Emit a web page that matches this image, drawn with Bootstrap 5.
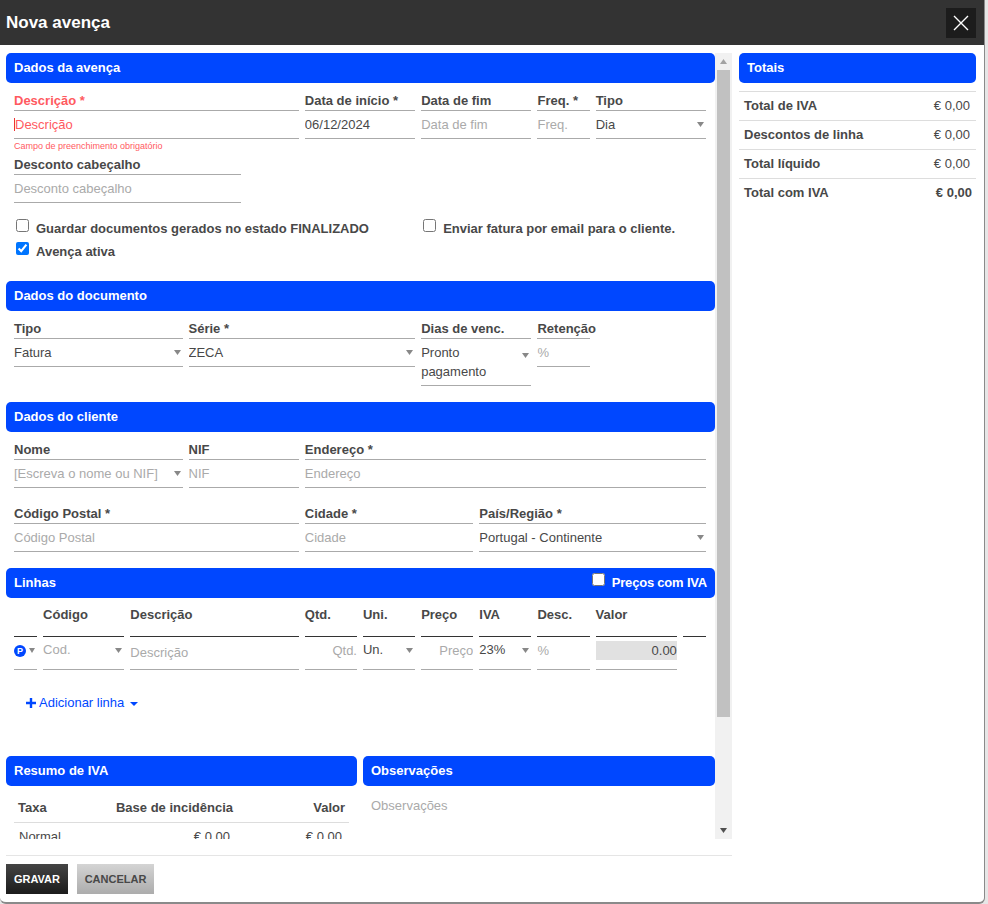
<!DOCTYPE html>
<html lang="pt">
<head>
<meta charset="utf-8">
<title>Nova avença</title>
<link href="https://cdn.jsdelivr.net/npm/bootstrap@5.3.0/dist/css/bootstrap.min.css" rel="stylesheet">
<style>
html,body{height:100%;overflow:hidden;background:#e6e6e6;}
body{font-family:"Liberation Sans",Arial,sans-serif;font-size:13px;line-height:19px;color:#484848;}
.dlg{width:985px;height:904px;background:#fff;border-right:1px solid #8a8a8a;border-bottom:2px solid #8a8a8a;border-radius:0 0 6px 6px;}
.dlg-head{height:45px;background:#333;padding:0 8px 0 6px;}
.dlg-title{font-size:17px;font-weight:700;color:#fff;line-height:43px;margin:0;}
.dlg-close{width:30px;height:30px;background:#1c1c1c;border:0;padding:0;display:flex;align-items:center;justify-content:center;}
.dlg-body{padding:8px 8px 0 6px;}
.main-col{width:726px;}
.pane{height:786px;}
.scroller{width:709px;height:786px;overflow:hidden;}
.sbar{width:17px;height:786px;background:#f1f1f1;padding:0 2px;}
.sbar-up,.sbar-down{height:17px;}
.sbar-thumb{height:647px;background:#c1c1c1;}
.sbar-gap{height:105px;}
.side-col{width:237px;margin-left:7px;}
.sec-head{height:30px;background:#0047ff;color:#fff;font-weight:700;border-radius:5px;padding:0 8px;line-height:29px;margin:0;font-size:13px;}
.frow{--bs-gutter-x:6px;--bs-gutter-y:0;margin-left:5px;margin-right:0;width:698px;}
.fld-label{display:block;height:20px;border-bottom:1px solid #aaa;font-weight:700;line-height:19px;margin:0;white-space:nowrap;}
.fld-input.form-control,.fld-input.form-select{display:block;width:100%;height:28px;border:0;border-bottom:1px solid #aaa;border-radius:0;padding:0;font-size:13px;line-height:19px;color:#484848;font-family:inherit;background-color:#fff;box-shadow:none;}
.fld-input.form-select{background-image:url("data:image/svg+xml,%3Csvg xmlns='http://www.w3.org/2000/svg' width='7' height='5'%3E%3Cpath d='M0 0h7L3.500 5z' fill='%23888'/%3E%3C/svg%3E");background-repeat:no-repeat;background-position:right 2px center;background-size:7px 5px;padding-right:12px;}
.fld-input::placeholder{color:#aaa;opacity:1;}
.fld-input.form-select.is-empty,.line-input.form-select.is-empty{color:#aaa;}
div.fld-input.form-select.two-lines{height:47px;padding-top:4px;white-space:normal;background-position:right 2px top 14px;}
.req-label{color:#ff5a5f;}
.req-input.form-control{padding-left:1px;}
.req-input::placeholder{color:#ff5a5f;opacity:1;}
.caret-mark{position:absolute;left:3px;top:27px;width:1px;height:13px;background:#e33;}
.hint-err{color:#ff5a5f;font-size:9px;line-height:12px;height:12px;margin-top:1px;margin-bottom:3px;white-space:nowrap;}
.cb{width:13px;height:13px;margin:0;flex:none;}
.cb-text{font-weight:700;}
.cb-line{height:23px;gap:7px;}
.cb-off{margin-left:2px;}
.iva-check{gap:7px;letter-spacing:-.2px;}
.iva-check .cb{margin-top:5px;}
.w-half{flex:0 0 auto;width:4.1667%;}
.w-onehalf{flex:0 0 auto;width:12.5%;}
.th-label{display:block;height:39px;border-bottom:1px solid #333;font-weight:700;line-height:19px;padding-top:7px;margin:0;white-space:nowrap;}
.line-h{height:33px;border:0;border-bottom:1px solid #aaa;padding-top:8px;}
.line-cell{display:flex;align-items:flex-start;}
.tag-p{width:12px;height:12px;border-radius:50%;background:#0047ff;color:#fff;font-size:9px;font-weight:700;line-height:12px;text-align:center;flex:none;}
.mini-caret{width:0;height:0;border-left:3px solid transparent;border-right:3px solid transparent;border-top:5px solid #888;margin-left:3px;margin-top:3px;}
.line-input.form-control,.line-input.form-select{display:block;width:100%;height:33px;border:0;border-bottom:1px solid #aaa;border-radius:0;padding:0 0 6px;font-size:13px;color:#484848;font-family:inherit;background-color:#fff;box-shadow:none;}
.line-input.form-select{background-image:url("data:image/svg+xml,%3Csvg xmlns='http://www.w3.org/2000/svg' width='7' height='5'%3E%3Cpath d='M0 0h7L3.500 5z' fill='%23888'/%3E%3C/svg%3E");background-repeat:no-repeat;background-position:right 2px top 11px;background-size:7px 5px;}
.line-input::placeholder{color:#aaa;opacity:1;}
.line-input.form-control.ph-low{padding:0 0 2px;}
.valor-box{height:19px;background:#e1e1e1;text-align:right;line-height:19px;}
.valor-cell{height:33px;border-bottom:1px solid #aaa;padding-top:4px;}
.add-line{color:#0047ff;text-decoration:none;display:inline-flex;align-items:center;margin-left:20px;}
.add-plus{margin-right:3px;}
.add-caret{width:0;height:0;border-left:4px solid transparent;border-right:4px solid transparent;border-top:4px solid #0047ff;margin-left:6px;margin-top:2px;}
.add-wrap{height:86px;padding-top:23px;}
.half-a{width:351px;flex:none;}
.half-b{width:352px;flex:none;margin-left:6px;}
.iva-tb{width:335px;margin:10px 0 0 8px;border-collapse:collapse;}
.iva-tb th{font-weight:700;padding:2px 4px 4px;border-bottom:1px solid #ddd;height:26px;line-height:19px;}
.iva-tb th:first-child{width:90px;}
.iva-tb th:last-child{width:112px;}
.iva-tb td{padding:4px 7px 4px 5px;line-height:19px;}
.obs-area{display:block;width:100%;height:60px;border:0;resize:none;padding:10px 8px 0;font-size:13px;line-height:19px;color:#484848;font-family:inherit;outline:0;}
.obs-area::placeholder{color:#aaa;opacity:1;}
.tot-tb{width:237px;margin-top:8px;border-collapse:collapse;}
.tot-tb td{border-top:1px solid #ddd;height:29px;padding:0 4px 2px 5px;line-height:19px;font-weight:700;}
.tot-tb td.val{font-weight:400;text-align:right;padding-right:6px;}
.tot-tb td.val-b{font-weight:700;text-align:right;padding-right:4px;}
.foot-bar{width:726px;border-top:1px solid #e5e5e5;margin-top:16px;padding-top:8px;}
.act-btn.btn{height:30px;border:0;border-radius:0;padding:0;font-size:11px;font-weight:700;line-height:30px;}
.act-save.btn{background:linear-gradient(#444,#1c1c1c);color:#fff;width:62px;}
.act-cancel.btn{background:linear-gradient(#d4d4d4,#acacac);color:#484848;width:77px;margin-left:9px;}
</style>
</head>
<body>
<div class="dlg d-flex flex-column">
  <div class="dlg-head d-flex align-items-center justify-content-between">
    <h5 class="dlg-title">Nova avença</h5>
    <button class="dlg-close" type="button" aria-label="Fechar"><svg width="16" height="16" viewBox="0 0 16 16"><path d="M1 1l14 14M15 1L1 15" stroke="#fff" stroke-width="1.400" fill="none"/></svg></button>
  </div>
  <div class="dlg-body d-flex">
    <div class="main-col">
      <div class="pane d-flex">
        <div class="scroller">
          <h6 class="sec-head">Dados da avença</h6>
          <div class="row frow mt-2">
            <div class="col-5 position-relative"><label class="fld-label req-label">Descrição *</label><input class="form-control fld-input req-input" placeholder="Descrição"><span class="caret-mark"></span><div class="hint-err">Campo de preenchimento obrigatório</div></div>
            <div class="col-2"><label class="fld-label">Data de início *</label><input class="form-control fld-input" value="06/12/2024"></div>
            <div class="col-2"><label class="fld-label">Data de fim</label><input class="form-control fld-input" placeholder="Data de fim"></div>
            <div class="col-1"><label class="fld-label">Freq. *</label><input class="form-control fld-input" placeholder="Freq."></div>
            <div class="col-2"><label class="fld-label">Tipo</label><select class="form-select fld-input"><option>Dia</option></select></div>
          </div>
          <div class="row frow">
            <div class="col-4"><label class="fld-label">Desconto cabeçalho</label><input class="form-control fld-input" placeholder="Desconto cabeçalho"></div>
          </div>
          <div class="row frow mt-3">
            <div class="col-7 d-flex cb-line"><input class="cb cb-off" type="checkbox"><span class="cb-text">Guardar documentos gerados no estado FINALIZADO</span></div>
            <div class="col-5 d-flex cb-line"><input class="cb cb-off" type="checkbox"><span class="cb-text">Enviar fatura por email para o cliente.</span></div>
          </div>
          <div class="row frow">
            <div class="col-12 d-flex cb-line"><input class="cb cb-off" type="checkbox" checked><span class="cb-text">Avença ativa</span></div>
          </div>

          <h6 class="sec-head mt-3">Dados do documento</h6>
          <div class="row frow mt-2">
            <div class="col-3"><label class="fld-label">Tipo</label><select class="form-select fld-input"><option>Fatura</option></select></div>
            <div class="col-4"><label class="fld-label">Série *</label><select class="form-select fld-input"><option>ZECA</option></select></div>
            <div class="col-2"><label class="fld-label">Dias de venc.</label><div class="form-select fld-input two-lines">Pronto pagamento</div></div>
            <div class="col-1"><label class="fld-label">Retenção</label><input class="form-control fld-input" placeholder="%"></div>
          </div>

          <h6 class="sec-head mt-3">Dados do cliente</h6>
          <div class="row frow mt-2">
            <div class="col-3"><label class="fld-label">Nome</label><select class="form-select fld-input is-empty"><option>[Escreva o nome ou NIF]</option></select></div>
            <div class="col-2"><label class="fld-label">NIF</label><input class="form-control fld-input" placeholder="NIF"></div>
            <div class="col-7"><label class="fld-label">Endereço *</label><input class="form-control fld-input" placeholder="Endereço"></div>
          </div>
          <div class="row frow mt-3">
            <div class="col-5"><label class="fld-label">Código Postal *</label><input class="form-control fld-input" placeholder="Código Postal"></div>
            <div class="col-3"><label class="fld-label">Cidade *</label><input class="form-control fld-input" placeholder="Cidade"></div>
            <div class="col-4"><label class="fld-label">País/Região *</label><select class="form-select fld-input"><option>Portugal - Continente</option></select></div>
          </div>

          <div class="sec-head mt-3 d-flex justify-content-between">
            <span>Linhas</span>
            <span class="d-flex iva-check"><input class="cb" type="checkbox"><span>Preços com IVA</span></span>
          </div>
          <div class="row frow">
            <div class="w-half"><span class="th-label">&nbsp;</span></div>
            <div class="w-onehalf"><span class="th-label">Código</span></div>
            <div class="col-3"><span class="th-label">Descrição</span></div>
            <div class="col-1"><span class="th-label">Qtd.</span></div>
            <div class="col-1"><span class="th-label">Uni.</span></div>
            <div class="col-1"><span class="th-label">Preço</span></div>
            <div class="col-1"><span class="th-label">IVA</span></div>
            <div class="col-1"><span class="th-label">Desc.</span></div>
            <div class="w-onehalf"><span class="th-label">Valor</span></div>
            <div class="w-half"><span class="th-label">&nbsp;</span></div>
          </div>
          <div class="row frow">
            <div class="w-half"><div class="line-cell line-h"><span class="tag-p">P</span><span class="mini-caret"></span></div></div>
            <div class="w-onehalf"><select class="form-select line-input is-empty"><option>Cod.</option></select></div>
            <div class="col-3"><input class="form-control line-input ph-low" placeholder="Descrição"></div>
            <div class="col-1"><input class="form-control line-input text-end" placeholder="Qtd."></div>
            <div class="col-1"><select class="form-select line-input"><option>Un.</option></select></div>
            <div class="col-1"><input class="form-control line-input text-end" placeholder="Preço"></div>
            <div class="col-1"><select class="form-select line-input"><option>23%</option></select></div>
            <div class="col-1"><input class="form-control line-input" placeholder="%"></div>
            <div class="w-onehalf"><div class="valor-cell"><div class="valor-box">0.00</div></div></div>
          </div>
          <div class="add-wrap">
            <a class="add-line" href="#"><svg class="add-plus" width="10" height="10" viewBox="0 0 10 10"><path d="M3.800 0h2.400v3.800H10v2.400H6.200V10H3.800V6.200H0V3.800h3.800z" fill="#0047ff"/></svg>Adicionar linha<span class="add-caret"></span></a>
          </div>

          <div class="d-flex">
            <div class="half-a">
              <h6 class="sec-head">Resumo de IVA</h6>
              <table class="iva-tb">
                <thead><tr><th>Taxa</th><th class="text-end">Base de incidência</th><th class="text-end">Valor</th></tr></thead>
                <tbody><tr><td>Normal</td><td class="text-end">€ 0,00</td><td class="text-end">€ 0,00</td></tr></tbody>
              </table>
            </div>
            <div class="half-b">
              <h6 class="sec-head">Observações</h6>
              <textarea class="obs-area" placeholder="Observações"></textarea>
            </div>
          </div>
        </div>
        <div class="sbar">
          <div class="sbar-up d-flex align-items-center justify-content-center"><svg width="7" height="5"><path d="M0 5h7L3.500 0z" fill="#a3a3a3"/></svg></div>
          <div class="sbar-thumb"></div>
          <div class="sbar-gap"></div>
          <div class="sbar-down d-flex align-items-center justify-content-center"><svg width="7" height="5"><path d="M0 0h7L3.500 5z" fill="#505050"/></svg></div>
        </div>
      </div>
      <div class="foot-bar d-flex">
        <button class="btn act-btn act-save" type="button">GRAVAR</button>
        <button class="btn act-btn act-cancel" type="button">CANCELAR</button>
      </div>
    </div>
    <div class="side-col">
      <h6 class="sec-head">Totais</h6>
      <table class="tot-tb">
        <tbody>
          <tr><td>Total de IVA</td><td class="val">€ 0,00</td></tr>
          <tr><td>Descontos de linha</td><td class="val">€ 0,00</td></tr>
          <tr><td>Total líquido</td><td class="val">€ 0,00</td></tr>
          <tr><td>Total com IVA</td><td class="val-b">€ 0,00</td></tr>
        </tbody>
      </table>
    </div>
  </div>
</div>
<script src="https://cdn.jsdelivr.net/npm/bootstrap@5.3.0/dist/js/bootstrap.bundle.min.js"></script>
</body>
</html>
